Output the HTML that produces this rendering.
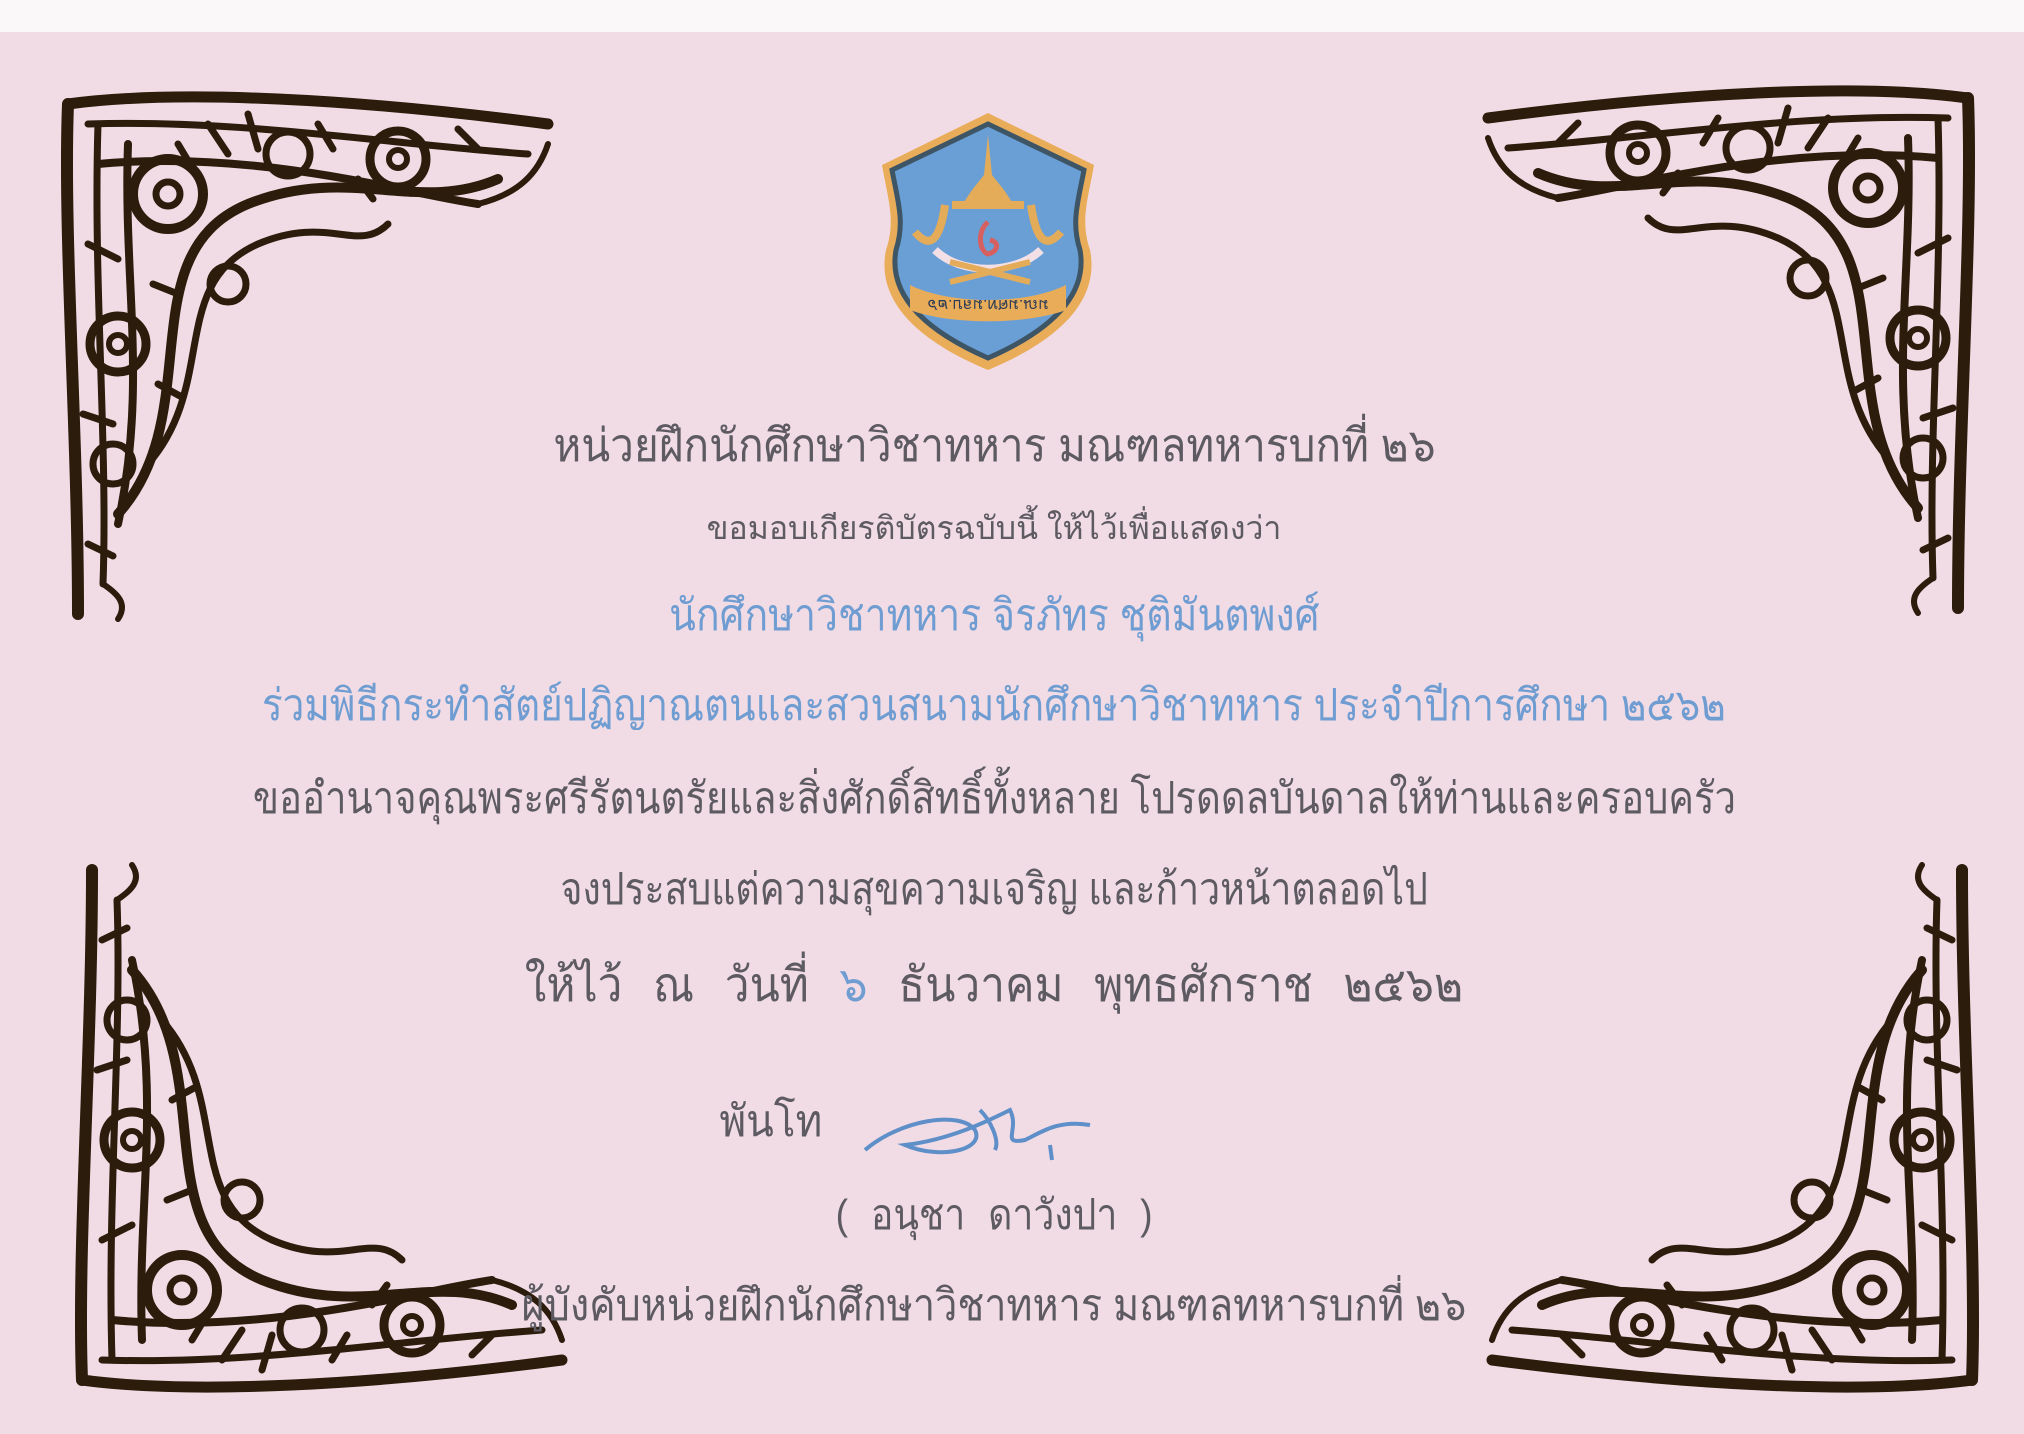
<!DOCTYPE html>
<html><head><meta charset="utf-8">
<style>
html,body{margin:0;padding:0;}
body{width:2024px;height:1434px;position:relative;overflow:hidden;background:#f1dce5;font-family:"Liberation Sans","Noto Sans CJK SC",sans-serif;}
.top{position:absolute;left:0;top:0;width:2024px;height:32px;background:#fbf8fa;}
.t{position:absolute;left:0;width:1988px;text-align:center;white-space:nowrap;color:#5d5a62;line-height:1;}
.t span{display:inline-block;transform-origin:50% 50%;}
.b{color:#6f9dd2;}
svg.o{position:absolute;left:0;top:0;}
</style></head><body>
<div class="top"></div>
<svg class="o" width="2024" height="1434" viewBox="0 0 2024 1434">
<defs>
<g id="c" fill="none" stroke="#2b1c0c" stroke-linecap="round">
 <path d="M10,20 C120,5 300,15 490,40" stroke-width="11"/>
 <path d="M30,40 C180,35 330,60 470,70" stroke-width="7"/>
 <path d="M40,80 C200,65 350,110 420,120" stroke-width="8"/>
 <path d="M10,20 C5,150 20,350 20,530" stroke-width="12"/>
 <path d="M40,40 C35,200 50,360 45,500" stroke-width="7"/>
 <path d="M70,60 C65,200 90,300 60,440" stroke-width="8"/>
 <path d="M60,430 C150,330 70,170 190,120 C290,80 360,130 440,95" stroke-width="10"/>
 <path d="M90,380 C160,300 110,200 200,160 C270,130 300,170 330,140" stroke-width="7"/>
 <circle cx="110" cy="110" r="35" stroke-width="10"/>
 <circle cx="110" cy="110" r="12" stroke-width="7"/>
 <circle cx="230" cy="70" r="22" stroke-width="7"/>
 <circle cx="340" cy="75" r="28" stroke-width="9"/>
 <circle cx="340" cy="75" r="9" stroke-width="6"/>
 <circle cx="60" cy="260" r="28" stroke-width="9"/>
 <circle cx="60" cy="260" r="9" stroke-width="6"/>
 <circle cx="55" cy="380" r="20" stroke-width="7"/>
 <circle cx="170" cy="200" r="18" stroke-width="7"/>
 <path d="M150,40 l20,30 M190,30 l10,35 M260,40 l15,25 M400,45 l20,20 M30,160 l30,15 M25,330 l30,10 M30,460 l25,12 M120,60 l15,25 M300,95 l15,20 M95,200 l25,10 M100,300 l22,12" stroke-width="7"/>
 <path d="M420,120 C460,110 480,90 490,60" stroke-width="6"/>
 <path d="M45,500 C60,510 70,520 60,535" stroke-width="6"/>
</g>
</defs>
<use href="#c" transform="translate(58,84)"/>
<use href="#c" transform="translate(1978,78) scale(-1,1)"/>
<use href="#c" transform="translate(72,1400) scale(1,-1)"/>
<use href="#c" transform="translate(1982,1400) scale(-1,-1)"/>
<!-- shield -->
<path d="M988,113 L1094,165 C1088,200 1080,220 1090,250 C1100,300 1060,340 988,370 C916,340 876,300 886,250 C896,220 888,200 882,165 Z" fill="#e9ad5a"/>
<path d="M988,124 L1084,170 C1078,202 1071,222 1080,250 C1088,295 1052,330 988,358 C924,330 888,295 896,250 C905,222 898,202 892,170 Z" fill="#6a9fd6" stroke="#3e5566" stroke-width="5"/>
<path d="M988,135 L984,175 L972,190 L962,205 L1014,205 L1004,190 L992,175 Z" fill="#e4ac58"/>
<path d="M945,205 C940,240 930,250 915,232 M1031,205 C1036,240 1046,250 1061,232 M952,205 L1024,205" stroke="#e4ac58" stroke-width="8" fill="none"/>
<path d="M988,222 c-12,10 -8,30 0,32 c10,-2 12,-12 2,-14" stroke="#d66060" stroke-width="5" fill="none"/>
<path d="M935,250 C960,275 1015,275 1041,250" stroke="#f3dfe6" stroke-width="8" fill="none"/>
<path d="M950,282 L1030,262 M950,262 L1030,282" stroke="#e4ac58" stroke-width="6"/>
<path d="M910,285 C950,305 1026,305 1066,285 L1066,310 C1026,325 950,325 910,310 Z" fill="#e9ad5a"/>
<text x="988" y="312" font-size="16" fill="#2d3c55" text-anchor="middle" transform="rotate(180 988 306)" font-family="Liberation Sans,sans-serif">มณ.มศท.มลบ.๒๖</text>
<!-- signature -->
<path d="M865,1150 C900,1120 960,1110 975,1130 C985,1150 940,1160 905,1145 C950,1140 990,1120 1010,1110 C1020,1130 1000,1145 1025,1140 C1045,1130 1060,1120 1090,1125 M980,1110 C990,1120 1000,1140 995,1150 M1050,1145 l2,15" stroke="#5e8fc8" stroke-width="4" fill="none"/>
</svg>
<div class="t" style="top:422px;font-size:46px;"><span style="transform:scaleX(.92)">หน่วยฝึกนักศึกษาวิชาทหาร มณฑลทหารบกที่ ๒๖</span></div>
<div class="t" style="top:512px;font-size:32px;"><span>ขอมอบเกียรติบัตรฉบับนี้ ให้ไว้เพื่อแสดงว่า</span></div>
<div class="t b" style="top:594px;font-size:44px;"><span style="transform:scaleX(.89)">นักศึกษาวิชาทหาร จิรภัทร ชุติมันตพงศ์</span></div>
<div class="t b" style="top:684px;font-size:44px;"><span style="transform:scaleX(.88)">ร่วมพิธีกระทำสัตย์ปฏิญาณตนและสวนสนามนักศึกษาวิชาทหาร ประจำปีการศึกษา ๒๕๖๒</span></div>
<div class="t" style="top:777px;font-size:44px;"><span style="transform:scaleX(.87)">ขออำนาจคุณพระศรีรัตนตรัยและสิ่งศักดิ์สิทธิ์ทั้งหลาย โปรดดลบันดาลให้ท่านและครอบครัว</span></div>
<div class="t" style="top:868px;font-size:44px;"><span style="transform:scaleX(.85)">จงประสบแต่ความสุขความเจริญ และก้าวหน้าตลอดไป</span></div>
<div class="t" style="top:962px;font-size:48px;word-spacing:20px;"><span style="transform:scaleX(.92)">ให้ไว้ ณ วันที่ <b class="b" style="font-weight:normal">๖</b> ธันวาคม พุทธศักราช ๒๕๖๒</span></div>
<div class="t" style="top:1100px;left:715px;width:auto;font-size:44px;"><span style="transform:scaleX(.92)">พันโท</span></div>
<div class="t" style="top:1194px;font-size:42px;word-spacing:14px;"><span style="transform:scaleX(.89)">( อนุชา ดาวังปา )</span></div>
<div class="t" style="top:1284px;font-size:44px;"><span style="transform:scaleX(.9)">ผู้บังคับหน่วยฝึกนักศึกษาวิชาทหาร มณฑลทหารบกที่ ๒๖</span></div>
</body></html>
